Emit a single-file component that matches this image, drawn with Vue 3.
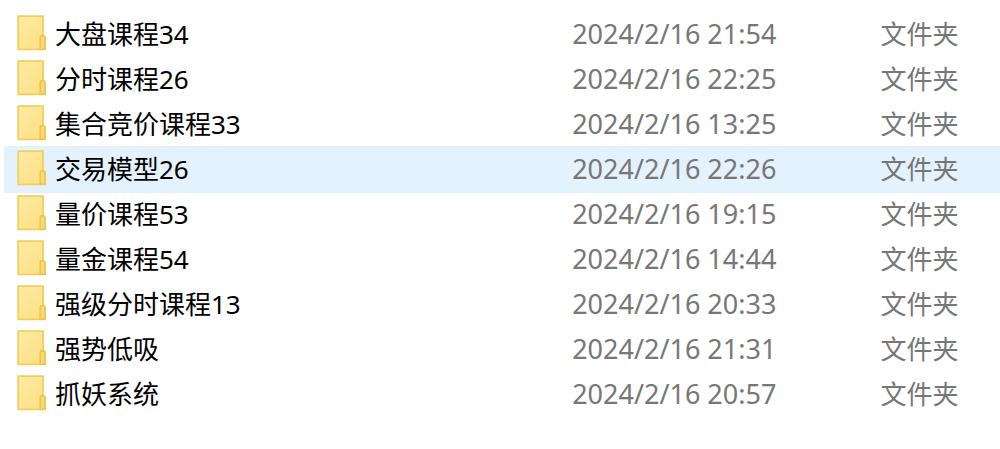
<script setup>
import { ref } from 'vue'

const files = [
  { name: '大盘课程34', date: '2024/2/16 21:54' },
  { name: '分时课程26', date: '2024/2/16 22:25' },
  { name: '集合竞价课程33', date: '2024/2/16 13:25' },
  { name: '交易模型26', date: '2024/2/16 22:26' },
  { name: '量价课程53', date: '2024/2/16 19:15' },
  { name: '量金课程54', date: '2024/2/16 14:44' },
  { name: '强级分时课程13', date: '2024/2/16 20:33' },
  { name: '强势低吸', date: '2024/2/16 21:31' },
  { name: '抓妖系统', date: '2024/2/16 20:57' },
]
const active = ref(3)
</script>

<template>
  <main class="explorer">
    <svg class="defs" width="0" height="0" aria-hidden="true">
      <defs>
        <linearGradient id="folder-fill" x1="0" y1="0" x2="1" y2="1">
          <stop offset="0" stop-color="#ffeba6" />
          <stop offset="1" stop-color="#fddf80" />
        </linearGradient>
      </defs>
    </svg>
    <table class="files">
      <colgroup>
        <col class="col-name" />
        <col class="col-date" />
        <col />
      </colgroup>
      <tbody>
        <tr v-for="(file, i) in files" :key="file.name" :class="{ active: i === active }" @click="active = i">
          <td class="name">
            <div class="cell">
              <svg class="folder" width="30" height="36" viewBox="0 0 30 36" aria-hidden="true">
                <path d="M1.2 1.2H26V20.5L28 22.5V34.3H1.2Z" fill="url(#folder-fill)" stroke="#f0cf5c" stroke-width="1.8" />
                <path d="M23.2 34.3V22.6Q23.2 20.6 25.4 20.6Q28 20.8 28 23V34.3Z" fill="#f7d978" stroke="#e8c551" stroke-width="1.5" />
              </svg>
              <span>{{ file.name }}</span>
            </div>
          </td>
          <td class="date">{{ file.date }}</td>
          <td class="type">文件夹</td>
        </tr>
      </tbody>
    </table>
  </main>
</template>

<style>
body {
  background: #fff;
}
</style>

<style scoped>
.explorer {
  padding: 12px 0 24px 5px;
  font-family: "Noto Sans", "Noto Sans CJK SC", sans-serif;
  font-size: 26px;
  line-height: 40px;
  color: #000;
}
.defs {
  display: block;
}
.files {
  width: 100%;
  table-layout: fixed;
  border-collapse: collapse;
}
.col-name {
  width: 57%;
}
.col-date {
  width: 31%;
}
tr {
  height: 45px;
  cursor: default;
}
tr.active {
  background: #e4f2fe;
  box-shadow: 0 0 0 1px #e4f2fe;
}
td {
  padding: 0 0 2px;
  white-space: nowrap;
}
.cell {
  display: flex;
  align-items: center;
  gap: 8px;
  padding-left: 12px;
}
.folder {
  flex: none;
  margin-bottom: 2px;
}
.date,
.type {
  color: #777;
}
.date {
  font-size: 27px;
}
</style>
